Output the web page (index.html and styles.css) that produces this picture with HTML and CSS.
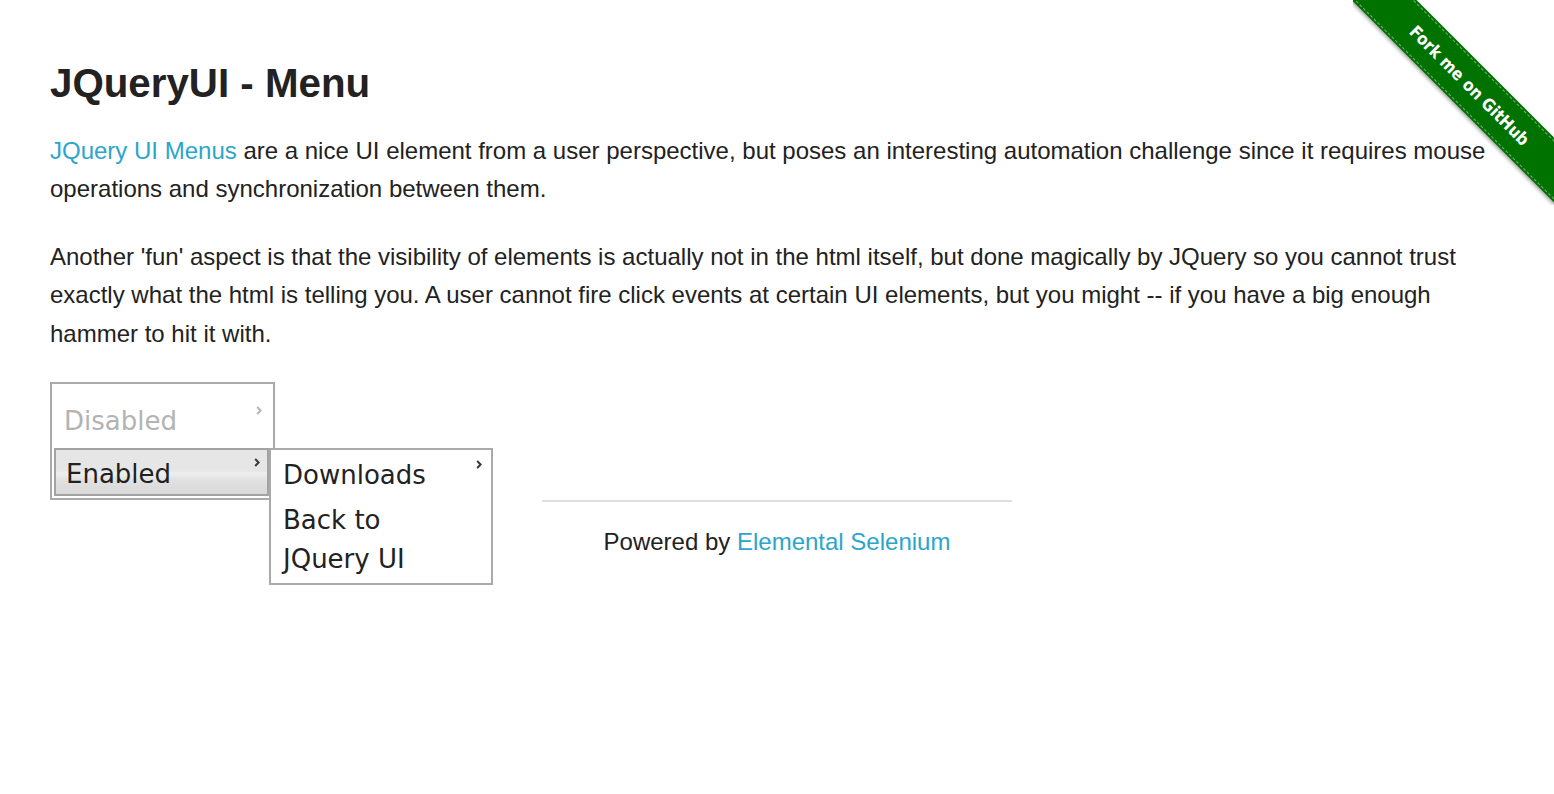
FILE: index.html
```html
<!DOCTYPE html>
<html lang="en">
<head>
<meta charset="utf-8">
<title>The Internet</title>
<link rel="stylesheet" href="styles.css">
</head>
<body>
<div class="ribbon-wrap">
  <div class="ribbon"><span class="ribbon-text">Fork me on GitHub</span></div>
</div>
<div class="page">
  <div class="content">
    <h3 class="title">JQueryUI - Menu</h3>
    <p class="para"><a class="link" href="#">JQuery UI Menus</a> are a nice UI element from a user perspective, but poses an interesting automation challenge since it requires mouse operations and synchronization between them.</p>
    <p class="para">Another 'fun' aspect is that the visibility of elements is actually not in the html itself, but done magically by JQuery so you cannot trust exactly what the html is telling you. A user cannot fire click events at certain UI elements, but you might -- if you have a big enough hammer to hit it with.</p>
    <ul class="menu">
      <li class="item disabled">Disabled<svg class="caret" viewBox="0 0 6 9" width="6" height="9"><path d="M1.2 1 L4.6 4.5 L1.2 8" fill="none" stroke="currentColor" stroke-width="2"/></svg></li>
      <li class="item active">Enabled<svg class="caret" viewBox="0 0 6 9" width="6" height="9"><path d="M1.2 1 L4.6 4.5 L1.2 8" fill="none" stroke="currentColor" stroke-width="2"/></svg>
        <ul class="submenu">
          <li class="item">Downloads<svg class="caret" viewBox="0 0 6 9" width="6" height="9"><path d="M1.2 1 L4.6 4.5 L1.2 8" fill="none" stroke="currentColor" stroke-width="2"/></svg></li>
          <li class="item">Back to JQuery UI</li>
        </ul>
      </li>
    </ul>
  </div>
  <div class="footer">
    <div class="footer-col">
      <hr class="rule">
      <div class="powered">Powered by <a class="link" href="#">Elemental Selenium</a></div>
    </div>
  </div>
</div>
</body>
</html>
```
FILE: styles.css
```css
html, body {
  margin: 0;
  padding: 0;
  background: #ffffff;
}
body {
  font-family: "Liberation Sans", Arial, Helvetica, sans-serif;
  color: #222222;
  font-size: 24px;
}
.page {
  padding: 56px 50px 0 50px;
  min-height: 794px;
  box-sizing: border-box;
}
.title {
  margin: 0 0 20px 0;
  font-size: 40.3px;
  line-height: 56px;
  font-weight: bold;
  color: #222222;
}
.para {
  margin: 0 0 29px 0;
  font-size: 24px;
  line-height: 38.4px;
}
.link {
  color: #2ba6cb;
  text-decoration: none;
}
.menu {
  list-style: none;
  margin: 0;
  margin-top: 1px;
  padding: 2px 4px 2px 2px;
  width: 225px;
  box-sizing: border-box;
  border: 2px solid #aaaaaa;
  font-family: "DejaVu Sans", Verdana, sans-serif;
  font-size: 26px;
  color: #222222;
  background: #ffffff;
}
.item {
  position: relative;
  padding: 4px 26px 2px 10px;
  line-height: 39px;
  white-space: normal;
}
.caret {
  position: absolute;
  top: 8px;
  right: 7px;
  color: #3a3a3a;
}
.disabled {
  margin: 12px 0 5px 0;
  color: #b3b3b3;
}
.disabled .caret {
  color: #b5b5b5;
}
.active {
  border: 2px solid #a3a3a3;
  padding: 5px 10px 0 10px;
  height: 39px;
  background: linear-gradient(to bottom, #e6e6e6 0%, #e6e6e6 48%, #efefef 52%, #e0e0e0 70%, #d9d9d9 100%);
  color: #212121;
}
.submenu {
  list-style: none;
  position: absolute;
  left: 213px;
  top: -2px;
  width: 224px;
  box-sizing: border-box;
  margin: 0;
  padding: 2px 2px 2px 2px;
  border: 2px solid #aaaaaa;
  background: #ffffff;
  color: #222222;
}
.footer {
  display: flex;
  justify-content: center;
}
.footer-col {
  width: 470px;
}
.rule {
  margin: 0;
  height: 0;
  border: 0;
  border-top: 2px solid #dedede;
}
.powered {
  margin-top: 21px;
  text-align: center;
  font-size: 24px;
  line-height: 38.4px;
}
.ribbon-wrap {
  position: absolute;
  top: 0;
  right: 0;
  width: 201px;
  height: 205px;
  overflow: hidden;
  pointer-events: none;
}
.ribbon {
  position: absolute;
  left: -37px;
  top: 59px;
  width: 300px;
  height: 46px;
  transform: rotate(45deg);
  background: #007200;
  box-shadow: 0 2px 4px rgba(0, 0, 0, 0.35);
  display: flex;
  align-items: center;
  justify-content: center;
}
.ribbon::before {
  content: "";
  position: absolute;
  left: 0;
  right: 0;
  top: 2px;
  bottom: 2px;
  border-top: 1px dashed rgba(255, 255, 255, 0.45);
  border-bottom: 1px dashed rgba(255, 255, 255, 0.45);
}
.ribbon-text {
  font-family: "DejaVu Sans Condensed", "DejaVu Sans", sans-serif;
  font-stretch: condensed;
  font-weight: bold;
  font-size: 17px;
  color: #ffffff;
  white-space: nowrap;
  padding-left: 10px;
}
```
